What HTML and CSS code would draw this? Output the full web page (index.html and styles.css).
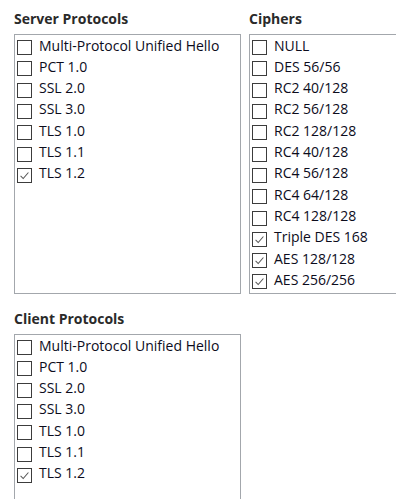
FILE: index.html
```html
<!DOCTYPE html>
<html>
<head>
<meta charset="utf-8">
<title>Schannel</title>
<link rel="stylesheet" href="styles.css">
</head>
<body>
<div class="page">
	<div class="group">
		<div class="group-title">Server Protocols</div>
		<ul class="list">
			<li><span class="box"></span><span class="label">Multi-Protocol Unified Hello</span></li>
			<li><span class="box"></span><span class="label">PCT 1.0</span></li>
			<li><span class="box"></span><span class="label">SSL 2.0</span></li>
			<li><span class="box"></span><span class="label">SSL 3.0</span></li>
			<li><span class="box"></span><span class="label">TLS 1.0</span></li>
			<li><span class="box"></span><span class="label">TLS 1.1</span></li>
			<li><span class="box"><svg viewBox="0 0 15 15"><polyline points="3,8 6,11 12,4"/></svg></span><span class="label">TLS 1.2</span></li>
		</ul>
	</div>
	<div class="group">
		<div class="group-title">Ciphers</div>
		<ul class="list">
			<li><span class="box"></span><span class="label">NULL</span></li>
			<li><span class="box"></span><span class="label">DES 56/56</span></li>
			<li><span class="box"></span><span class="label">RC2 40/128</span></li>
			<li><span class="box"></span><span class="label">RC2 56/128</span></li>
			<li><span class="box"></span><span class="label">RC2 128/128</span></li>
			<li><span class="box"></span><span class="label">RC4 40/128</span></li>
			<li><span class="box"></span><span class="label">RC4 56/128</span></li>
			<li><span class="box"></span><span class="label">RC4 64/128</span></li>
			<li><span class="box"></span><span class="label">RC4 128/128</span></li>
			<li><span class="box"><svg viewBox="0 0 15 15"><polyline points="3,8 6,11 12,4"/></svg></span><span class="label">Triple DES 168</span></li>
			<li><span class="box"><svg viewBox="0 0 15 15"><polyline points="3,8 6,11 12,4"/></svg></span><span class="label">AES 128/128</span></li>
			<li><span class="box"><svg viewBox="0 0 15 15"><polyline points="3,8 6,11 12,4"/></svg></span><span class="label">AES 256/256</span></li>
		</ul>
	</div>
	<div class="group">
		<div class="group-title">Client Protocols</div>
		<ul class="list">
			<li><span class="box"></span><span class="label">Multi-Protocol Unified Hello</span></li>
			<li><span class="box"></span><span class="label">PCT 1.0</span></li>
			<li><span class="box"></span><span class="label">SSL 2.0</span></li>
			<li><span class="box"></span><span class="label">SSL 3.0</span></li>
			<li><span class="box"></span><span class="label">TLS 1.0</span></li>
			<li><span class="box"></span><span class="label">TLS 1.1</span></li>
			<li><span class="box"><svg viewBox="0 0 15 15"><polyline points="3,8 6,11 12,4"/></svg></span><span class="label">TLS 1.2</span></li>
		</ul>
	</div>
</div>
</body>
</html>
```
FILE: styles.css
```css
*{ margin:0; padding:0; box-sizing:border-box;}
html,body{ overflow:hidden; background:#fff;}
body{ font:14px/1.3 "Open Sans","Noto Sans",Arial,sans-serif; color:#0c0c1c;}
li{ list-style:none;}
.page{ display:grid; grid-template-columns:227px 170px; column-gap:8px; row-gap:6px; padding-left:14px;}
.group-title{ height:34px; padding-top:9px; line-height:20px; font-size:14px; font-weight:700; color:#2a2a2a;}
.list{ height:260px; border:1px solid #a3a7ac; padding:2px 0 0 2px;}
.list li{ display:flex; align-items:center; height:21.3px; white-space:nowrap;}
.box{ flex:none; width:15px; height:15px; border:1px solid #3c3c3c; background:#fff; margin-right:7px;}
.box svg{ display:block; width:13px; height:13px; fill:none; stroke:#555; stroke-width:1.2;}
.label{ padding-bottom:4px;}
```
